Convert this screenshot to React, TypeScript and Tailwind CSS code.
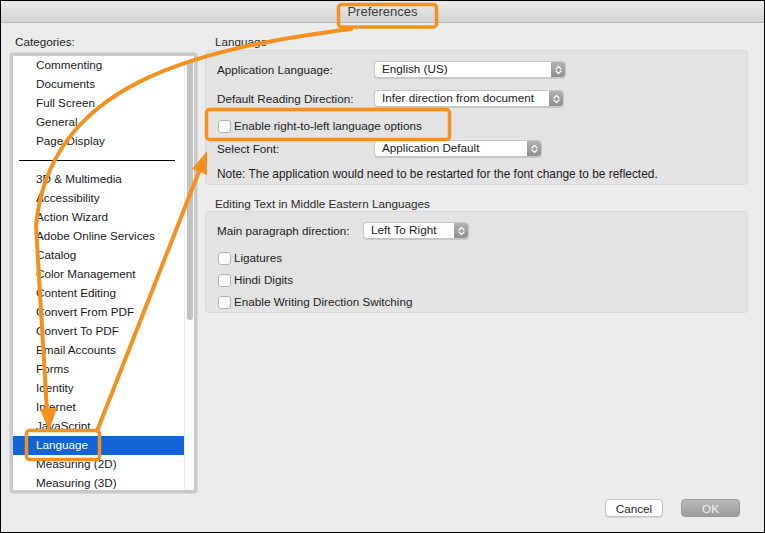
import React from 'react';

const font = { fontFamily: '"Liberation Sans", Arial, sans-serif' };

const topItems = ['Commenting', 'Documents', 'Full Screen', 'General', 'Page Display'];
const moreItems = [
  '3D & Multimedia',
  'Accessibility',
  'Action Wizard',
  'Adobe Online Services',
  'Catalog',
  'Color Management',
  'Content Editing',
  'Convert From PDF',
  'Convert To PDF',
  'Email Accounts',
  'Forms',
  'Identity',
  'Internet',
  'JavaScript',
  'Language',
  'Measuring (2D)',
  'Measuring (3D)',
];

function Chevrons() {
  return (
    <svg width="7" height="10" viewBox="0 0 7 10" fill="none">
      <path d="M1 4 L3.5 1.5 L6 4 M1 6 L3.5 8.5 L6 6" stroke="white" strokeWidth="1.2" strokeLinecap="round" strokeLinejoin="round" />
    </svg>
  );
}

function Popup({ value, width }: { value: string; width: string }) {
  return (
    <div className={`${width} h-[17px] flex rounded-[4px] bg-white border border-[#c6c6c6] shadow-[0_1px_0_rgba(0,0,0,0.12)] overflow-hidden`}>
      <div className="flex-1 pl-[7px] text-[11.7px] leading-[14px] text-[#1c1c1c] whitespace-nowrap overflow-hidden">{value}</div>
      <div className="w-[14px] flex items-center justify-center bg-linear-to-b from-[#b2b2b2] to-[#8f8f8f]">
        <Chevrons />
      </div>
    </div>
  );
}

function Checkbox({ label }: { label: string }) {
  return (
    <div className="flex items-center h-[14px] pl-[1px]">
      <div className="w-[13px] h-[13px] rounded-[3px] bg-white border border-[#b4b4b4] shadow-[inset_0_1px_0_rgba(0,0,0,0.04)]" />
      <span className="ml-[3px] text-[11.7px] text-[#1c1c1c] whitespace-nowrap">{label}</span>
    </div>
  );
}

function Row({ label, children }: { label: string; children: React.ReactNode }) {
  return (
    <div className="flex items-center h-[17px]">
      <div className="w-[157px] text-[11.7px] text-[#1c1c1c] whitespace-nowrap">{label}</div>
      {children}
    </div>
  );
}

function ListItem({ name, selected }: { name: string; selected?: boolean }) {
  return (
    <div
      className={`h-[19px] pl-[23px] text-[11.7px] leading-[17px] whitespace-nowrap ${
        selected ? 'bg-[#1263d6] text-white' : 'text-[#1a1a1a]'
      }`}
    >
      {name}
    </div>
  );
}

function Annotations() {
  const orange = '#f5901e';
  return (
    <svg className="absolute inset-0 pointer-events-none" width="765" height="533" viewBox="0 0 765 533" fill="none">
      {/* boxes */}
      <rect x="337.5" y="3.5" width="98" height="22.5" rx="3" stroke={orange} strokeWidth="3.5" />
      <rect x="205.5" y="108.5" width="243" height="30" rx="3" stroke={orange} strokeWidth="3.5" />
      <rect x="25.5" y="429.5" width="73" height="29" rx="3" stroke={orange} strokeWidth="3.5" />
      {/* arrow from title to Language item */}
      <path d="M350 28 C 195 48, 48 82, 35 225 L 46 410" stroke={orange} strokeWidth="4" strokeLinecap="round" />
      <polygon points="48,430 39,408 56,407" fill={orange} />
      {/* arrow from Language item to option */}
      <path d="M96 430 L 199 168" stroke={orange} strokeWidth="4" strokeLinecap="round" />
      <polygon points="206,150 191,168 206,174" fill={orange} />
    </svg>
  );
}

export default function App() {
  return (
    <div className="relative w-[765px] h-[533px] flex flex-col border border-black bg-[#ececec] overflow-hidden" style={font}>
      {/* Title bar */}
      <div className="h-[22px] shrink-0 flex items-center justify-center bg-linear-to-b from-[#ebebeb] to-[#d4d4d4] border-b border-[#b9b9b9]">
        <span className="text-[13px] text-[#3a3a3a]">Preferences</span>
      </div>

      <div className="flex-1 flex pl-[9px] pr-[16px] pt-[12px] pb-[15px]">
        {/* Categories */}
        <div className="w-[187px] flex flex-col">
          <div className="h-[14px] pl-[5px] text-[11.7px] leading-[14px] text-[#1c1c1c]">Categories:</div>
          <div className="mt-[4px] h-[440px] flex border-[3px] border-[#c9c9c9] rounded-[3px] bg-white overflow-hidden shadow-[0_0_0_1px_#d8d8d8]">
            <div className="flex-1 pt-0">
              {topItems.map((n) => (
                <ListItem key={n} name={n} />
              ))}
              <div className="h-[19px] flex items-center pl-[6px] pr-[6px]">
                <div className="h-px w-[156px] bg-black" />
              </div>
              {moreItems.map((n) => (
                <ListItem key={n} name={n} selected={n === 'Language'} />
              ))}
            </div>
            <div className="w-[10px] pt-[4px] flex justify-center bg-[#fafafa] border-l border-[#ececec]">
              <div className="w-[6px] h-[260px] rounded-full bg-[#c2c2c2]" />
            </div>
          </div>
        </div>

        {/* Right side */}
        <div className="flex-1 ml-[8px] flex flex-col">
          <div className="h-[14px] pl-[10px] text-[11.7px] leading-[14px] text-[#2a2a2a]">Language</div>
          <div className="mt-[1px] rounded-[4px] bg-[#e3e3e3] border border-[#d8d8d8] pl-[11px] pt-[10px] pb-[3px]">
            <Row label="Application Language:">
              <Popup value="English (US)" width="w-[192px]" />
            </Row>
            <div className="mt-[12px]">
              <Row label="Default Reading Direction:">
                <Popup value="Infer direction from document" width="w-[190px]" />
              </Row>
            </div>
            <div className="mt-[12px]">
              <Checkbox label="Enable right-to-left language options" />
            </div>
            <div className="mt-[7px]">
              <Row label="Select Font:">
                <Popup value="Application Default" width="w-[168px]" />
              </Row>
            </div>
            <div className="mt-[10px] h-[14px] text-[11.9px] leading-[14px] text-[#1c1c1c] whitespace-nowrap">
              Note: The application would need to be restarted for the font change to be reflected.
            </div>
          </div>

          <div className="mt-[12px] h-[14px] pl-[10px] text-[11.7px] leading-[14px] text-[#2a2a2a]">
            Editing Text in Middle Eastern Languages
          </div>
          <div className="rounded-[4px] bg-[#e3e3e3] border border-[#d8d8d8] pl-[11px] pt-[10px] pb-[3px]">
            <div className="flex items-center h-[17px]">
              <div className="w-[146px] text-[11.7px] text-[#1c1c1c] whitespace-nowrap">Main paragraph direction:</div>
              <Popup value="Left To Right" width="w-[106px]" />
            </div>
            <div className="mt-[12px]">
              <Checkbox label="Ligatures" />
            </div>
            <div className="mt-[8px]">
              <Checkbox label="Hindi Digits" />
            </div>
            <div className="mt-[8px]">
              <Checkbox label="Enable Writing Direction Switching" />
            </div>
          </div>

          <div className="mt-auto flex justify-end gap-[18px] pr-[8px]">
            <button className="w-[58px] h-[18px] rounded-[4px] bg-white border border-[#c4c4c4] shadow-[0_1px_0_rgba(0,0,0,0.1)] text-[11.7px] text-[#1c1c1c]">
              Cancel
            </button>
            <button className="w-[59px] h-[18px] rounded-[4px] bg-linear-to-b from-[#b9b9b9] to-[#9c9c9c] border border-[#9a9a9a] text-[11.7px] text-[#f4f4f4]">
              OK
            </button>
          </div>
        </div>
      </div>

      <Annotations />
    </div>
  );
}
